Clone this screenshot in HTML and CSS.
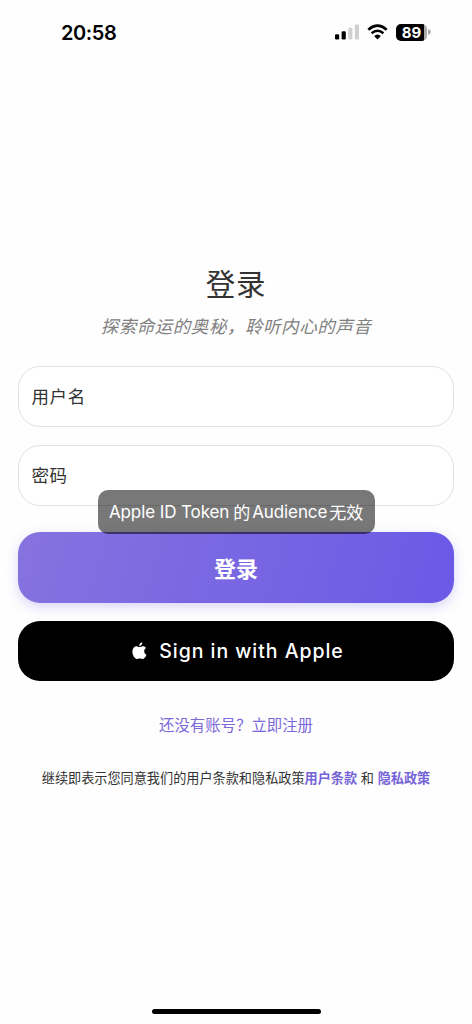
FILE: index.html
```
<!DOCTYPE html>
<html lang="zh-CN">
<head>
<meta charset="utf-8">
<title>登录</title>
<link rel="stylesheet" href="styles.css">
</head>
<body>
<div class="screen">
  <header class="status">
    <span class="time">20:58</span>
    <div class="indicators">
      <svg class="signal" width="24" height="16" viewBox="0 0 24 16">
        <rect x="0" y="10.2" width="4.2" height="5.3" rx="1.2"/>
        <rect x="6.6" y="7.2" width="4.2" height="8.3" rx="1.2"/>
        <rect class="dim" x="13.2" y="3.8" width="4.2" height="11.7" rx="1.2"/>
        <rect class="dim" x="19.8" y="0.4" width="4.2" height="15.1" rx="1.2"/>
      </svg>
      <svg class="wifi" width="21" height="16" viewBox="0 0 21 16">
        <path d="M1.3 5.8 Q10.5 -2.4 19.7 5.8 M4.6 9.3 Q10.5 4.2 16.4 9.3"/>
        <path class="dot" d="M7.1 12 Q10.5 9 13.9 12 L10.5 15.4Z"/>
      </svg>
      <div class="battery"><span>89</span></div>
      <svg class="cap" width="3" height="6" viewBox="0 0 3 6"><path d="M0 0 Q3 1 3 3 Q3 5 0 6Z"/></svg>
    </div>
  </header>
  <main class="login">
    <h1 class="title">登录</h1>
    <p class="subtitle">探索命运的奥秘，聆听内心的声音</p>
    <div class="field">用户名</div>
    <div class="field">密码</div>
    <div class="actions">
      <button class="btn primary">登录</button>
      <button class="btn apple">
        <svg width="15" height="18" viewBox="0 0 15 18"><path d="M10.3 0.3C10.5 2.3 8.9 4.1 7.2 4.1C7 2.2 8.6 0.6 10.3 0.3ZM7.5 5.1C8.2 5.1 9.3 4.2 10.9 4.2C12.2 4.2 13.3 4.9 14 5.9C11.3 7.6 11.8 11.4 14.5 12.6C13.8 14.9 12.3 17.1 10.8 17.1C9.7 17.1 9.2 16.5 7.8 16.5C6.4 16.5 5.8 17.1 4.8 17.1C2.8 17.1 0.4 13.1 0.4 9.8C0.4 6.4 2.4 4.3 4.6 4.3C5.9 4.3 6.8 5.1 7.5 5.1Z"/></svg>
        <span>Sign in with Apple</span>
      </button>
      <div class="toast"><span>Apple ID Token</span><span class="han">的</span><span>Audience</span><span class="han">无效</span></div>
    </div>
    <a class="register">还没有账号？立即注册</a>
    <p class="terms">继续即表示您同意我们的用户条款和隐私政策<b>用户条款</b> 和 <b>隐私政策</b></p>
  </main>
  <footer class="home"><div class="home-bar"></div></footer>
</div>
</body>
</html>
```
FILE: styles.css
```
* { box-sizing: border-box; }
body {
  margin: 0;
  background: #fefefe;
  color: #333;
  font-family: Inter, "Noto Sans CJK SC", sans-serif;
}
.screen { height: 1024px; display: flex; flex-direction: column; overflow: hidden; }
.status {
  height: 64px;
  padding: 0 41px 0 61px;
  display: flex;
  align-items: center;
  justify-content: space-between;
  color: #000;
}
.time { font-size: 20px; font-weight: 600; letter-spacing: -0.4px; line-height: 24px; padding-top: 2px; }
.indicators { display: flex; align-items: center; }
.signal { fill: #000; }
.signal .dim { fill: #d0d0d0; }
.wifi { margin-left: 8px; fill: none; stroke: #000; stroke-width: 2.6; }
.wifi .dot { fill: #000; stroke: none; }
.battery {
  width: 31px;
  height: 17px;
  margin-left: 8px;
  border-radius: 5px;
  background: linear-gradient(90deg, #000 28px, #aaa 28px);
  color: #fff;
  font-size: 15px;
  font-weight: 700;
  line-height: 17px;
  text-align: center;
}
.cap { margin-left: 1px; fill: #aaa; }
.login { flex: 1; display: flex; flex-direction: column; padding: 198px 18px 0; }
.title {
  margin: 0;
  font-size: 29.5px;
  font-weight: 400;
  letter-spacing: 0.8px;
  line-height: 44px;
  text-align: center;
}
.subtitle {
  margin: 7px 0 25px;
  color: #808080;
  font-size: 17.5px;
  font-style: italic;
  letter-spacing: 0.55px;
  line-height: 28px;
  text-align: center;
}
.field {
  height: 61px;
  margin-bottom: 18px;
  padding: 0 12.5px;
  border: 1px solid #e0e0e0;
  border-radius: 22px;
  background: #fff;
  font-size: 17.5px;
  letter-spacing: 0.6px;
  line-height: 60px;
}
.actions { position: relative; display: flex; flex-direction: column; gap: 18px; margin-top: 8px; }
.btn {
  display: flex;
  align-items: center;
  justify-content: center;
  border: 0;
  border-radius: 22px;
  padding: 0;
  color: #fff;
  font-family: inherit;
}
.primary {
  height: 71px;
  padding-bottom: 2px;
  background: linear-gradient(105deg, #8673df, #6b59e6);
  box-shadow: 0 4px 12px rgba(108, 92, 231, 0.25);
  font-size: 22px;
  font-weight: 700;
}
.apple { height: 60px; gap: 12px; padding-left: 4px; background: #000; font-size: 19.5px; font-weight: 500; letter-spacing: 0.95px; }
.apple svg { fill: #fff; }
.toast {
  position: absolute;
  top: -42px;
  left: 79.5px;
  width: 277px;
  height: 43.5px;
  display: flex;
  align-items: center;
  justify-content: center;
  border-radius: 10px;
  background: rgba(0, 0, 0, 0.53);
  color: #fff;
  font-size: 17px;
  letter-spacing: -0.1px;
}
.toast .han { margin: 0 2px 0 4px; }
.toast .han:last-child { margin: 0 0 0 2px; }
.register { margin-top: 33px; color: #7b68d9; font-size: 15.4px; line-height: 24px; text-align: center; }
.terms { margin: 30px 0 0; font-size: 13.15px; line-height: 20px; text-align: center; white-space: nowrap; }
.terms b { color: #7564d8; font-weight: 700; }
.home { height: 15px; display: flex; justify-content: center; }
.home-bar { width: 169px; height: 5px; border-radius: 3px; background: #000; }
```
